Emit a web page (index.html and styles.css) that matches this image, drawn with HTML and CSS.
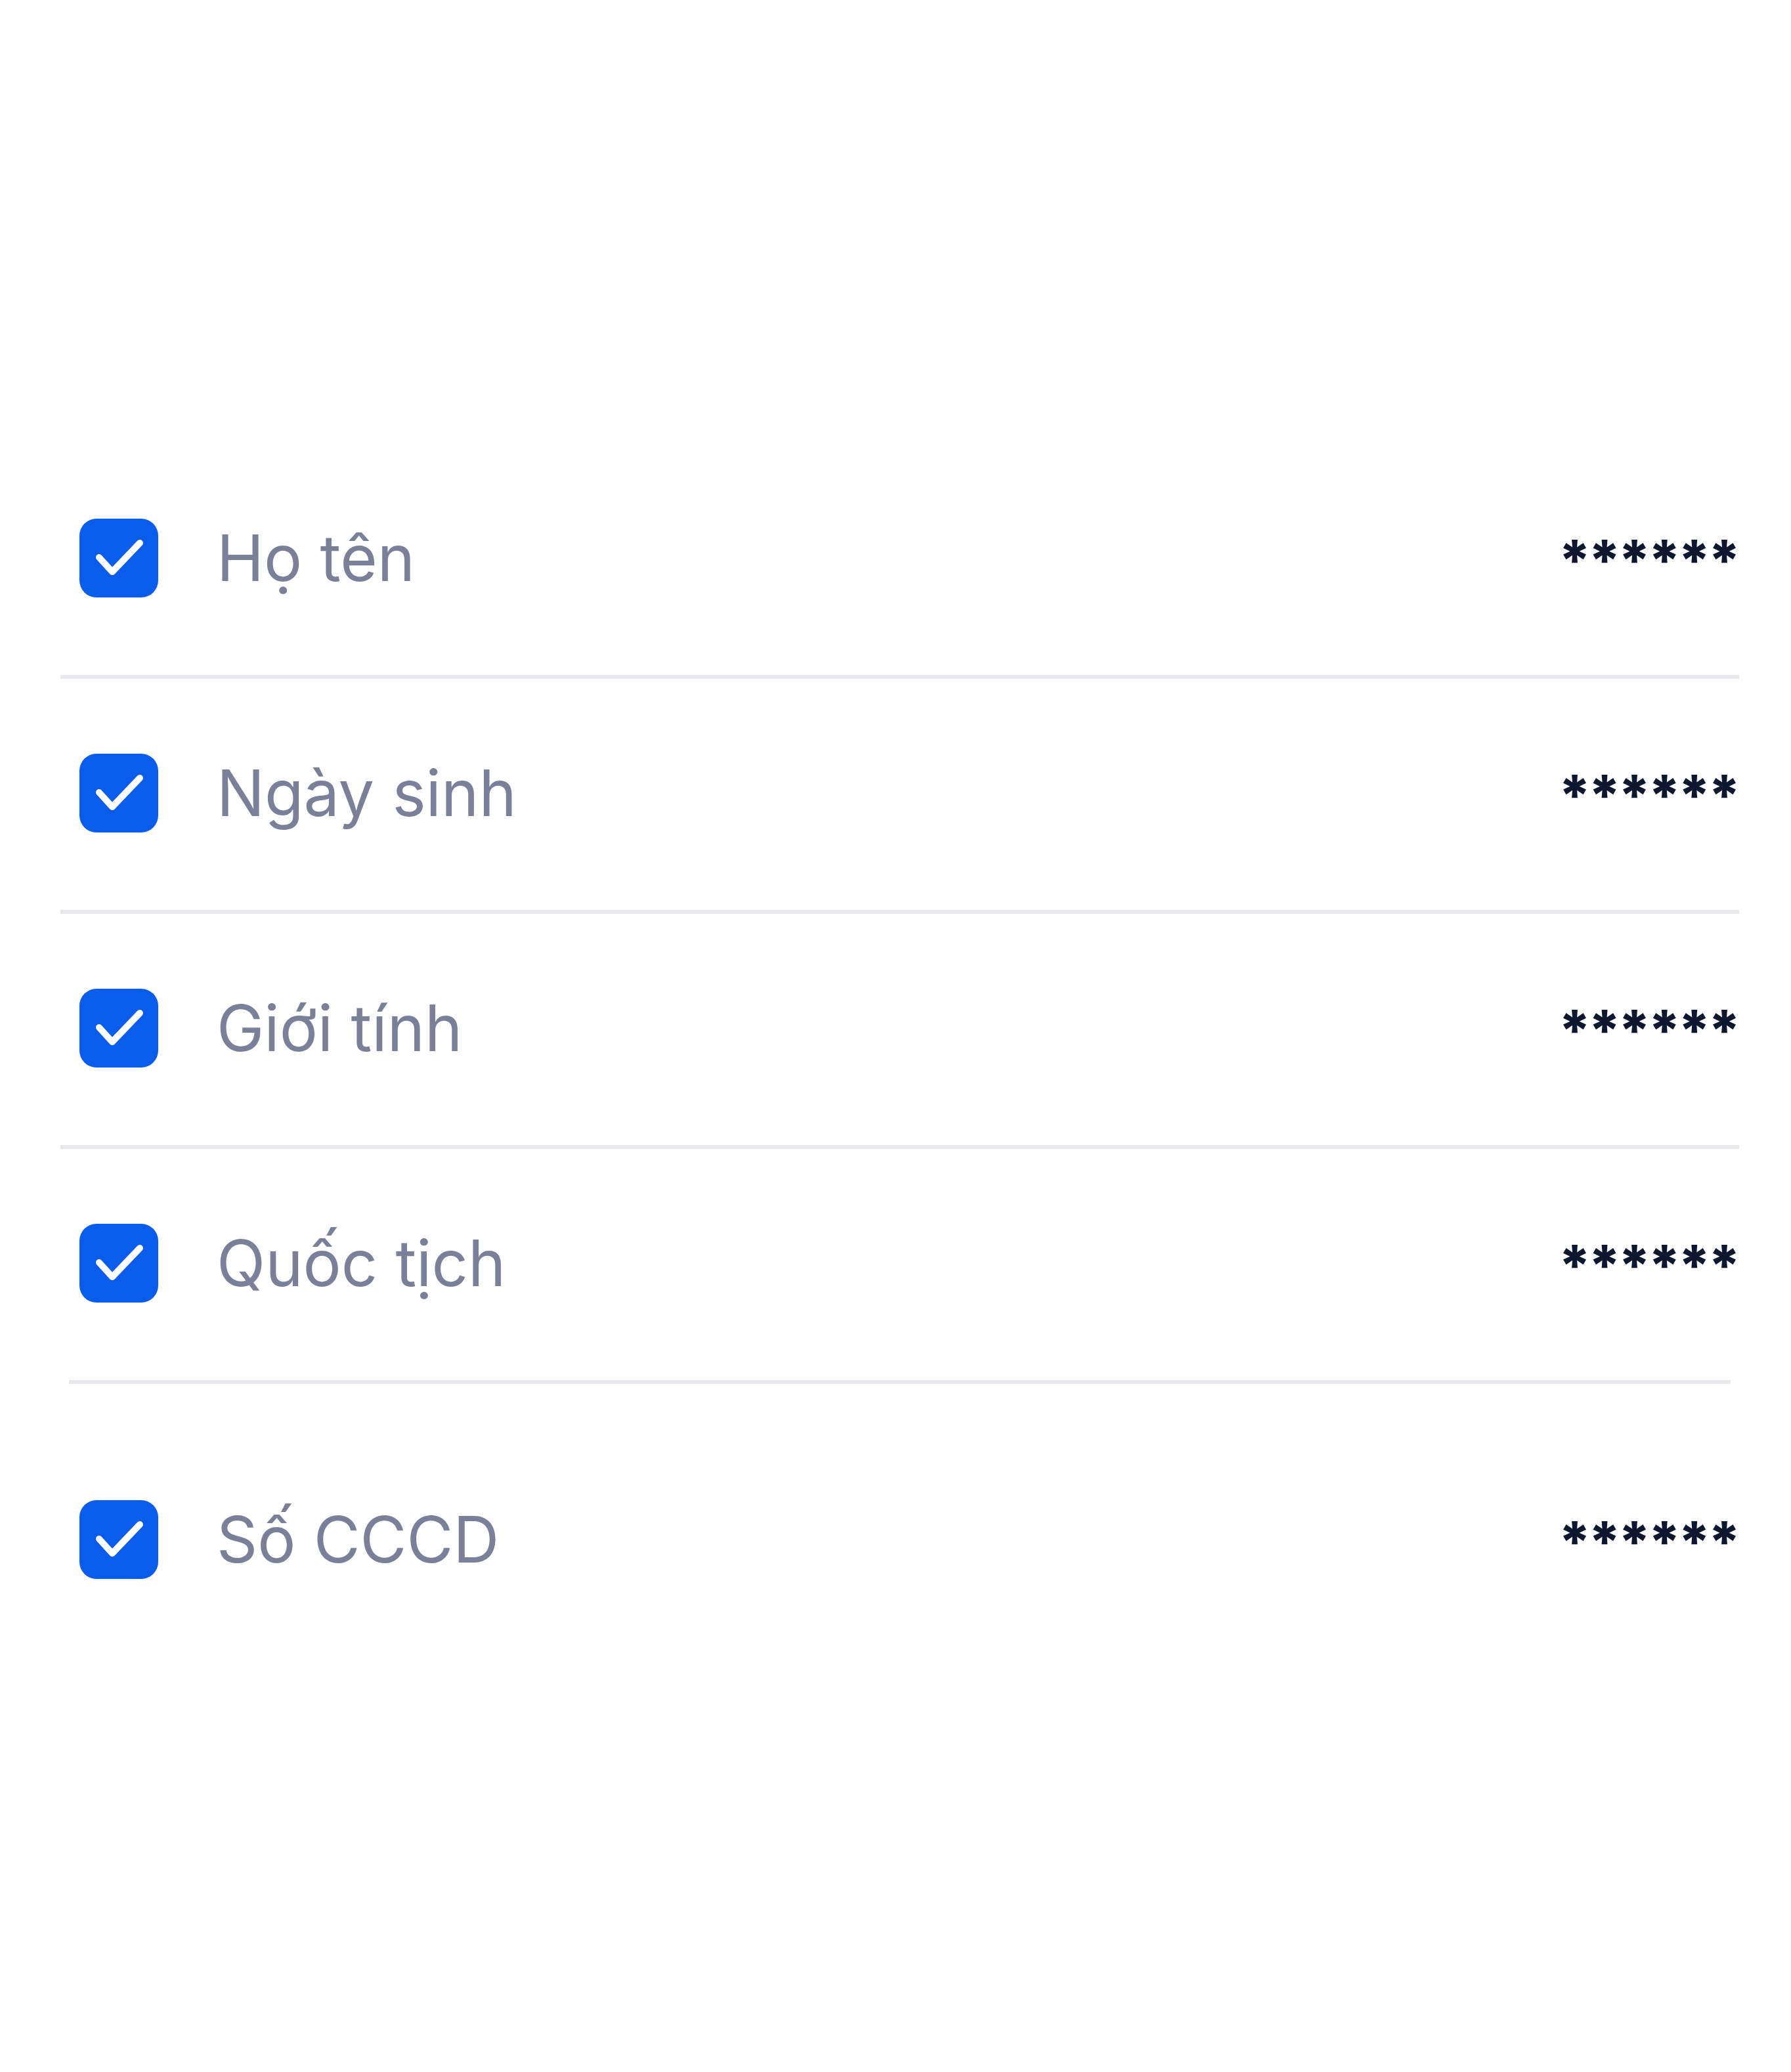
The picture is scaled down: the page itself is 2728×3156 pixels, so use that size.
FILE: index.html
```html
<!DOCTYPE html>
<html lang="vi">
<head>
<meta charset="utf-8">
<title>Thông tin</title>
<link rel="stylesheet" href="styles.css">
</head>
<body>
<main class="list">
  <div class="row">
    <span class="check"><svg viewBox="0 0 120 120"><path d="M30 59 L50 81 L92 37"/></svg></span>
    <span class="label">Họ tên</span>
    <span class="mask">******</span>
  </div>
  <div class="divider"></div>
  <div class="row">
    <span class="check"><svg viewBox="0 0 120 120"><path d="M30 59 L50 81 L92 37"/></svg></span>
    <span class="label">Ngày sinh</span>
    <span class="mask">******</span>
  </div>
  <div class="divider"></div>
  <div class="row">
    <span class="check"><svg viewBox="0 0 120 120"><path d="M30 59 L50 81 L92 37"/></svg></span>
    <span class="label">Giới tính</span>
    <span class="mask">******</span>
  </div>
  <div class="divider"></div>
  <div class="row">
    <span class="check"><svg viewBox="0 0 120 120"><path d="M30 59 L50 81 L92 37"/></svg></span>
    <span class="label">Quốc tịch</span>
    <span class="mask">******</span>
  </div>
  <div class="divider divider-inset"></div>
  <div class="row row-last">
    <span class="check"><svg viewBox="0 0 120 120"><path d="M30 59 L50 81 L92 37"/></svg></span>
    <span class="label">Số CCCD</span>
    <span class="mask">******</span>
  </div>
</main>
</body>
</html>
```
FILE: styles.css
```css
html, body {
  margin: 0;
  padding: 0;
  background: #ffffff;
}

body {
  font-family: Inter, "Noto Sans", "Liberation Sans", sans-serif;
}

.list {
  width: 2557px;
  padding: 676px 0 0 92px;
  display: flex;
  flex-direction: column;
}

.row {
  height: 352px;
  display: flex;
  align-items: center;
  padding: 0 0 4px 29px;
  box-sizing: border-box;
}

.row-last {
  height: 474px;
  padding-bottom: 0;
}

.check {
  width: 120px;
  height: 120px;
  border-radius: 26px;
  background: #0a5ceb;
  flex: none;
  display: flex;
}

.check svg {
  width: 120px;
  height: 120px;
  fill: none;
  stroke: #ffffff;
  stroke-width: 10;
  stroke-linecap: round;
  stroke-linejoin: round;
}

.label {
  margin-left: 89px;
  font-size: 97px;
  color: #7b809a;
  flex: 1;
  line-height: 1.2;
}

.mask {
  font-size: 86px;
  font-weight: 800;
  color: #0d1730;
  letter-spacing: -4.5px;
  margin-right: 2px;
  line-height: 1;
  margin-top: 8px;
}

.divider {
  height: 6px;
  background: #e8e9ec;
}

.divider-inset {
  margin: 0 13px;
}
```
